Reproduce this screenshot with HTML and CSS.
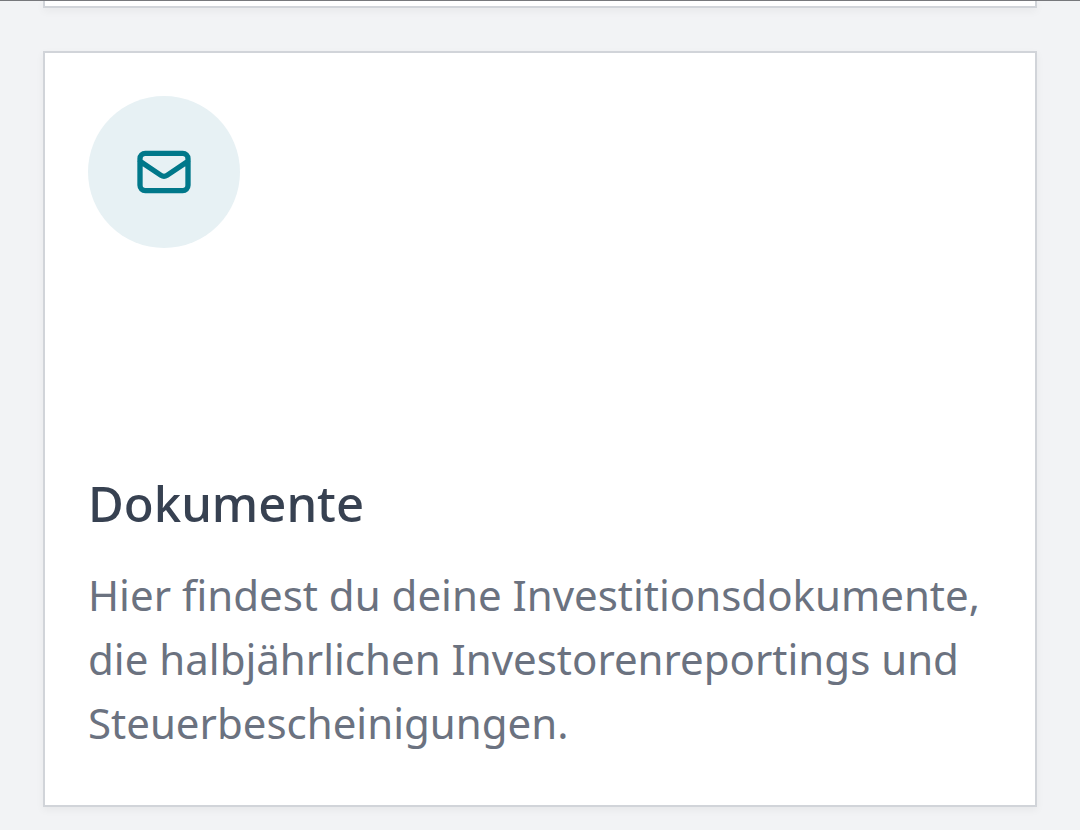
FILE: index.html
```
<!DOCTYPE html>
<html lang="de">
<head>
  <meta charset="UTF-8" />
  <meta name="viewport" content="width=device-width, initial-scale=1.0" />
  <title>Dokumente</title>
  <link rel="stylesheet" href="styles.css">
</head>
<body>
  <main class="card-list">
    <div class="card card-previous"></div>
    <a class="card" href="#dokumente">
      <span class="icon-circle">
        <svg class="icon" viewBox="0 0 24 24" fill="none" stroke="currentColor" stroke-width="2" stroke-linecap="round" stroke-linejoin="round" aria-hidden="true">
          <path d="M3 8l7.89 5.26a2 2 0 002.22 0L21 8M5 19h14a2 2 0 002-2V7a2 2 0 00-2-2H5a2 2 0 00-2 2v10a2 2 0 002 2z" />
        </svg>
      </span>
      <h3 class="card-title">Dokumente</h3>
      <p class="card-text">Hier findest du deine Investitionsdokumente, die halbjährlichen Investorenreportings und Steuerbescheinigungen.</p>
    </a>
  </main>
</body>
</html>
```

FILE: styles.css
```
* {
  box-sizing: border-box;
}
body {
  margin: 0;
  font-family: 'Noto Sans', sans-serif;
  background-color: #f2f3f5;
  border-top: 1px solid #77787c;
}
.card-list {
  display: flex;
  flex-direction: column;
  gap: 43px;
  padding: 0 43px 22px;
}
.card {
  display: block;
  padding: 43px 43px 50px;
  background: #fff;
  border: 2px solid #d1d4d9;
  box-shadow: 0 3px 8px rgba(0, 0, 0, 0.05);
  color: inherit;
  text-decoration: none;
}
.card-previous {
  padding: 5px 0 0;
  border-top: none;
}
.icon-circle {
  display: flex;
  align-items: center;
  justify-content: center;
  width: 152px;
  height: 152px;
  margin-bottom: 223px;
  border-radius: 50%;
  background: #e7f1f4;
}
.icon {
  width: 64px;
  height: 64px;
  color: #00788a;
}
.card-title {
  margin: 0 0 28px;
  font-size: 49px;
  line-height: 64px;
  font-weight: 500;
  color: #374151;
}
.card-text {
  margin: 0;
  font-size: 42px;
  line-height: 64px;
  font-weight: 400;
  color: #6b7280;
}
```
